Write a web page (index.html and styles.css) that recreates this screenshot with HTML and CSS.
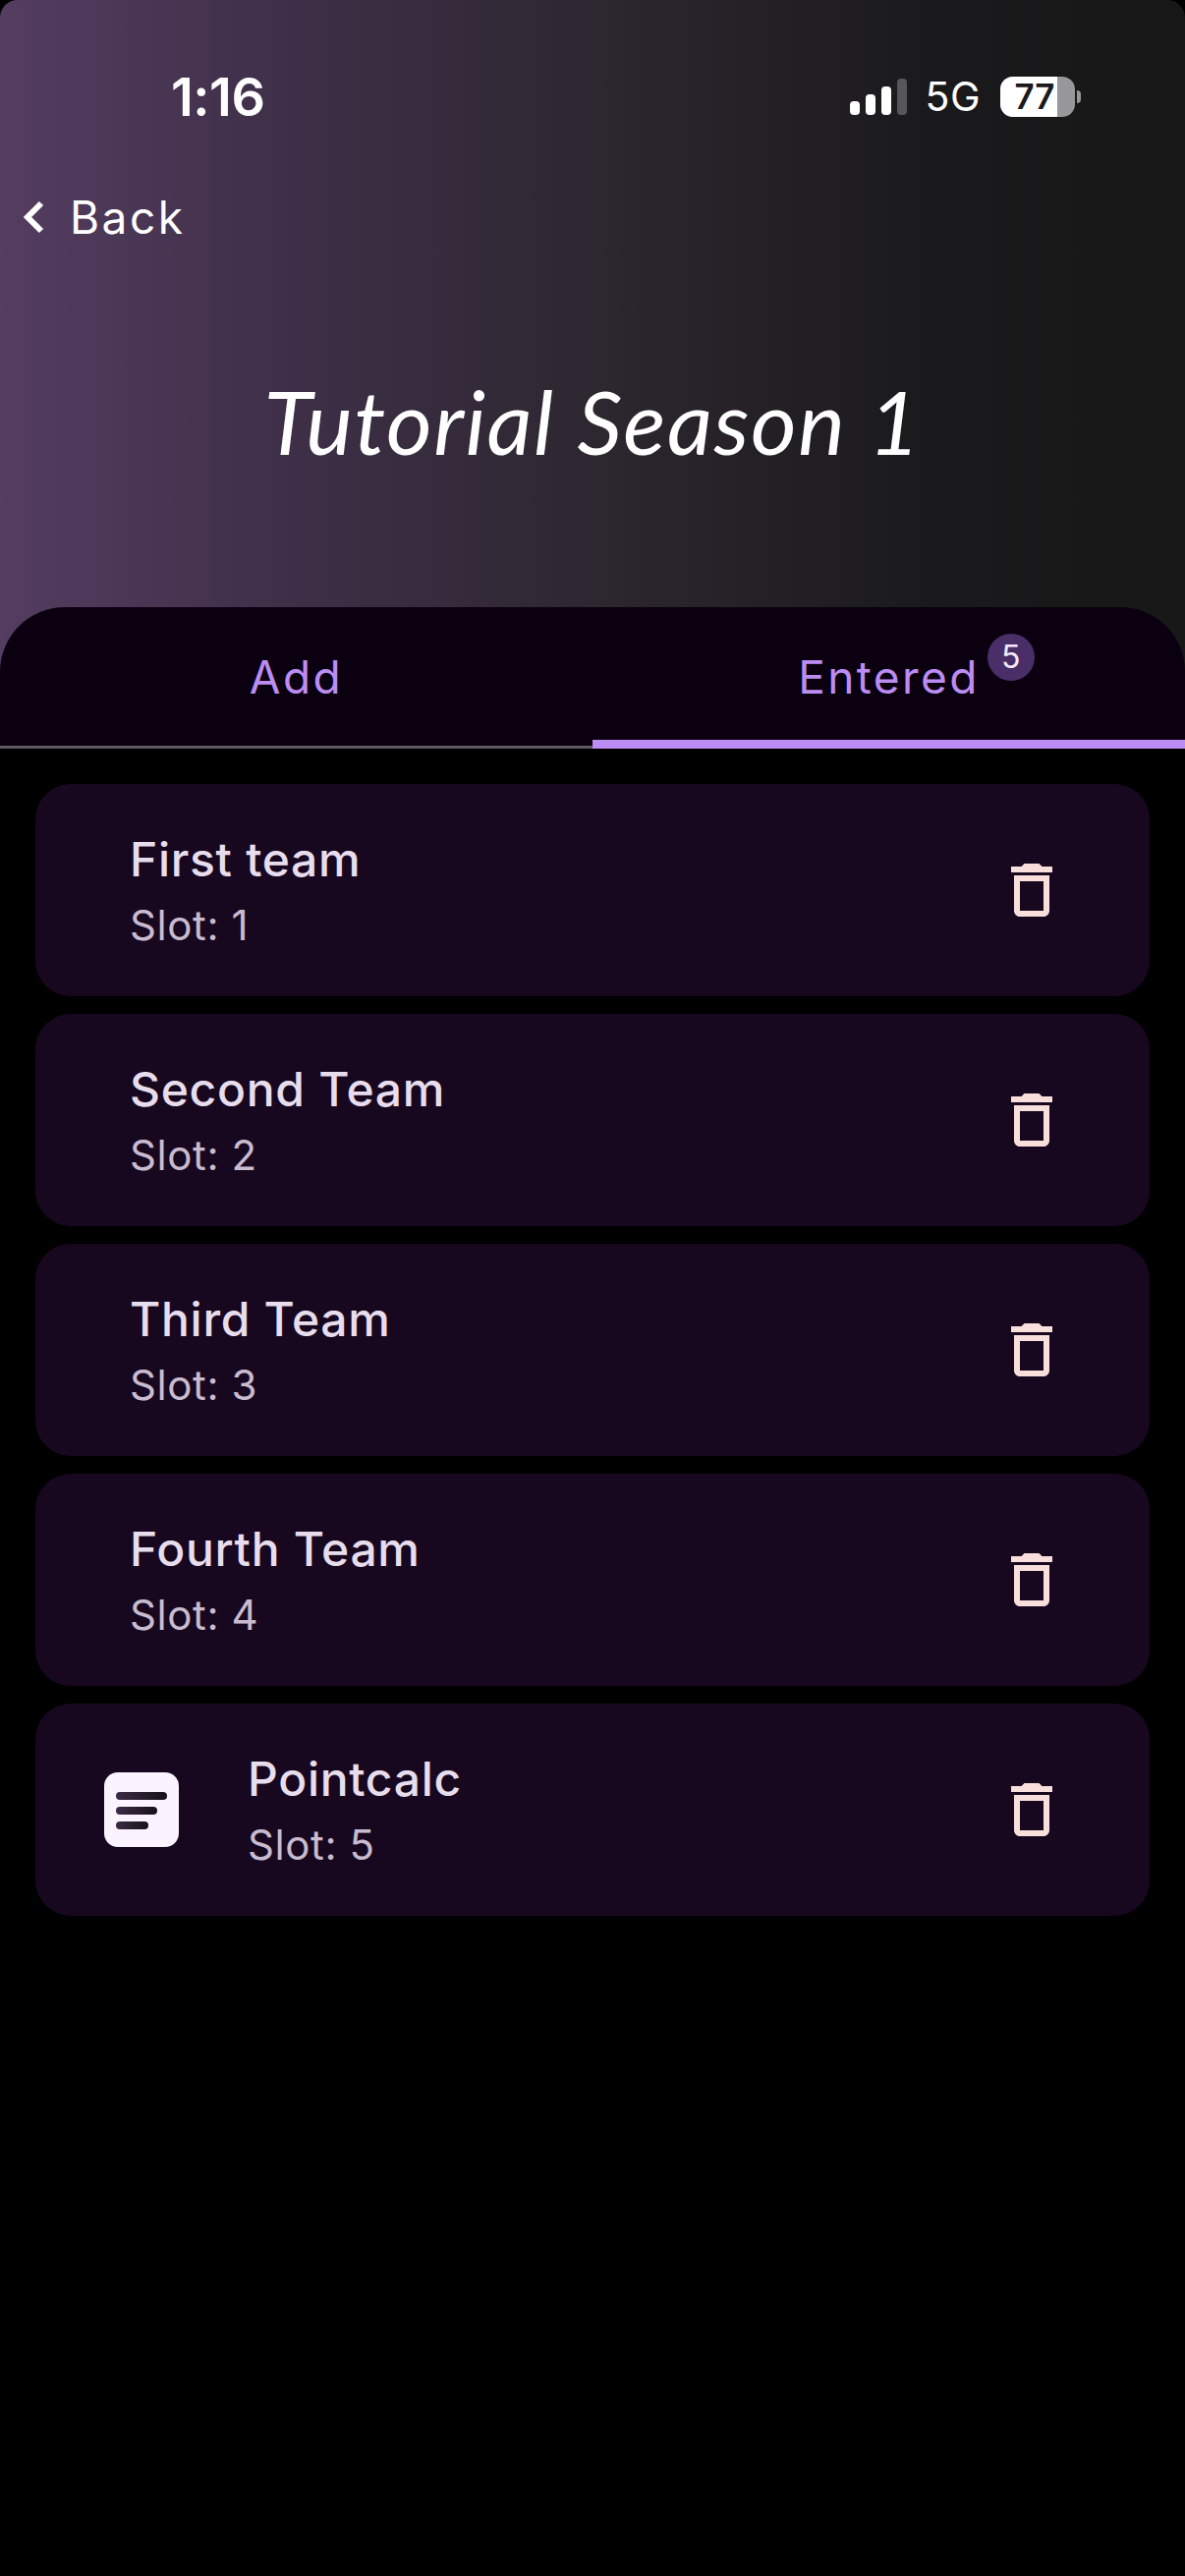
FILE: index.html
```html
<!DOCTYPE html>
<html lang="en">
<head>
  <meta charset="UTF-8">
  <title>Tutorial Season 1</title>
  <link rel="stylesheet" href="styles.css">
</head>
<body>

  <!-- Header -->
  <div class="header">
    <div class="status-bar">
      <div class="time">1:16</div>
      <div class="status-right">
        <div class="signal">
          <span class="bar bar1"></span>
          <span class="bar bar2"></span>
          <span class="bar bar3"></span>
          <span class="bar bar4"></span>
        </div>
        <div class="network">5G</div>
        <div class="battery"><span class="battery-level">77</span></div>
        <span class="battery-cap"></span>
      </div>
    </div>
    <div class="back">
      <svg class="back-icon" viewBox="0 0 22 36"><path d="M18 4 L4 18 L18 32" fill="none" stroke="#fff" stroke-width="6" stroke-linejoin="miter"/></svg>
      <span>Back</span>
    </div>
    <div class="page-title">Tutorial Season 1</div>
  </div>

  <!-- Tabs -->
  <div class="tabs">
    <div class="tab">Add</div>
    <div class="tab tab-active">
      <span class="tab-label">Entered<span class="badge">5</span></span>
    </div>
  </div>

  <!-- Teams -->
  <div class="list">
    <div class="card">
      <div class="card-text">
        <div class="team-name">First team</div>
        <div class="slot">Slot: 1</div>
      </div>
      <svg class="trash" viewBox="0 0 24 24"><path d="M6 19c0 1.1.9 2 2 2h8c1.1 0 2-.9 2-2V7H6v12zM8 9h8v10H8V9zm7.5-5l-1-1h-5l-1 1H5v2h14V4z"/></svg>
    </div>
    <div class="card">
      <div class="card-text">
        <div class="team-name">Second Team</div>
        <div class="slot">Slot: 2</div>
      </div>
      <svg class="trash" viewBox="0 0 24 24"><path d="M6 19c0 1.1.9 2 2 2h8c1.1 0 2-.9 2-2V7H6v12zM8 9h8v10H8V9zm7.5-5l-1-1h-5l-1 1H5v2h14V4z"/></svg>
    </div>
    <div class="card">
      <div class="card-text">
        <div class="team-name">Third Team</div>
        <div class="slot">Slot: 3</div>
      </div>
      <svg class="trash" viewBox="0 0 24 24"><path d="M6 19c0 1.1.9 2 2 2h8c1.1 0 2-.9 2-2V7H6v12zM8 9h8v10H8V9zm7.5-5l-1-1h-5l-1 1H5v2h14V4z"/></svg>
    </div>
    <div class="card">
      <div class="card-text">
        <div class="team-name">Fourth Team</div>
        <div class="slot">Slot: 4</div>
      </div>
      <svg class="trash" viewBox="0 0 24 24"><path d="M6 19c0 1.1.9 2 2 2h8c1.1 0 2-.9 2-2V7H6v12zM8 9h8v10H8V9zm7.5-5l-1-1h-5l-1 1H5v2h14V4z"/></svg>
    </div>
    <div class="card card-logo">
      <svg class="logo" viewBox="0 0 76 76">
        <defs>
          <linearGradient id="lineFade" x1="0" x2="1" y1="0" y2="0">
            <stop offset="0" stop-color="#3d2b45"/>
            <stop offset="1" stop-color="#17121a"/>
          </linearGradient>
        </defs>
        <rect width="76" height="76" rx="14" fill="#fbf4ff"/>
        <rect x="12" y="20" width="52" height="8" rx="4" fill="url(#lineFade)"/>
        <rect x="12" y="35" width="42" height="8" rx="4" fill="url(#lineFade)"/>
        <rect x="12" y="50" width="33" height="8" rx="4" fill="url(#lineFade)"/>
      </svg>
      <div class="card-text">
        <div class="team-name">Pointcalc</div>
        <div class="slot">Slot: 5</div>
      </div>
      <svg class="trash" viewBox="0 0 24 24"><path d="M6 19c0 1.1.9 2 2 2h8c1.1 0 2-.9 2-2V7H6v12zM8 9h8v10H8V9zm7.5-5l-1-1h-5l-1 1H5v2h14V4z"/></svg>
    </div>
  </div>

</body>
</html>
```

FILE: styles.css
```css
body {
  margin: 0;
  height: 2622px;
  background-color: #000;
  font-family: Inter, "Liberation Sans", sans-serif;
  overflow: hidden;
}

.header {
  height: 684px;
  margin-bottom: -66px;
  background: linear-gradient(90deg, #543d60 0%, #40304a 22%, #2d2730 50%, #1a1a1c 78%, #171717 100%);
  border-radius: 18px 18px 0 0;
  color: #fff;
}

.status-bar {
  display: flex;
  justify-content: space-between;
  align-items: center;
  height: 50px;
  padding: 73px 106px 0 174px;
}

.time {
  font-size: 54px;
  font-weight: 600;
  letter-spacing: -0.5px;
}

.status-right {
  display: flex;
  align-items: center;
}

.signal {
  display: flex;
  align-items: flex-end;
  gap: 6px;
  height: 37px;
  margin-right: 18px;
}

.bar {
  width: 10px;
  background-color: #fff;
  border-radius: 4px;
}

.bar1 { height: 14px; }
.bar2 { height: 21px; }
.bar3 { height: 29px; }
.bar4 { height: 37px; background-color: #58565a; }

.network {
  font-size: 41px;
  letter-spacing: 0.5px;
  margin-right: 20px;
}

.battery {
  width: 76px;
  height: 41px;
  border-radius: 13px;
  overflow: hidden;
  background-color: #98979a;
}

.battery-level {
  display: block;
  box-sizing: border-box;
  width: 58px;
  height: 41px;
  padding-left: 12px;
  background-color: #fff;
  color: #1a1a1c;
  font-size: 35px;
  font-weight: 600;
  line-height: 41px;
  text-align: center;
}

.battery-cap {
  width: 4px;
  height: 13px;
  margin-left: 2px;
  background-color: #98979a;
  border-radius: 0 4px 4px 0;
}

.back {
  display: flex;
  align-items: center;
  gap: 25px;
  padding: 70px 0 0 24px;
  font-size: 46px;
  letter-spacing: 2.5px;
}

.back-icon {
  width: 22px;
  height: 36px;
}

.page-title {
  margin-top: 125px;
  text-align: center;
  font-family: Lato, sans-serif;
  font-style: italic;
  font-size: 90px;
  letter-spacing: 1.5px;
}

.tabs {
  position: relative;
  display: flex;
  height: 144px;
  background-color: #0b0010;
  border-radius: 66px 66px 0 0;
}

.tab {
  flex: 1;
  display: flex;
  justify-content: center;
  align-items: center;
  box-sizing: border-box;
  border-bottom: 3px solid #5f5a63;
  color: #bb8cf2;
  font-size: 46px;
  letter-spacing: 2.4px;
}

.tab-active {
  padding-top: 6px;
  border-bottom: 9px solid #bb8cf2;
}

.tab-label {
  position: relative;
}

.badge {
  position: absolute;
  left: 100%;
  top: -16px;
  margin-left: 8px;
  width: 48px;
  height: 48px;
  border-radius: 50%;
  background-color: #4a2e68;
  color: #f4e9ff;
  font-size: 32px;
  line-height: 48px;
  text-align: center;
  letter-spacing: 0;
}

.list {
  display: flex;
  flex-direction: column;
  gap: 18px;
  padding: 36px 36px 0;
}

.card {
  display: flex;
  align-items: center;
  height: 216px;
  box-sizing: border-box;
  padding: 0 48px 0 96px;
  background-color: #17081f;
  border-radius: 36px;
}

.card-logo {
  padding-left: 70px;
}

.logo {
  width: 76px;
  height: 76px;
  margin-right: 70px;
}

.card-text {
  flex: 1;
}

.team-name {
  color: #e7dded;
  font-size: 48px;
  font-weight: 500;
  letter-spacing: 0.7px;
}

.slot {
  margin-top: 12px;
  color: #c9bbd0;
  font-size: 42px;
  letter-spacing: 0.6px;
}

.trash {
  width: 72px;
  height: 72px;
  margin-right: 36px;
  fill: #f8dfdc;
}
```
